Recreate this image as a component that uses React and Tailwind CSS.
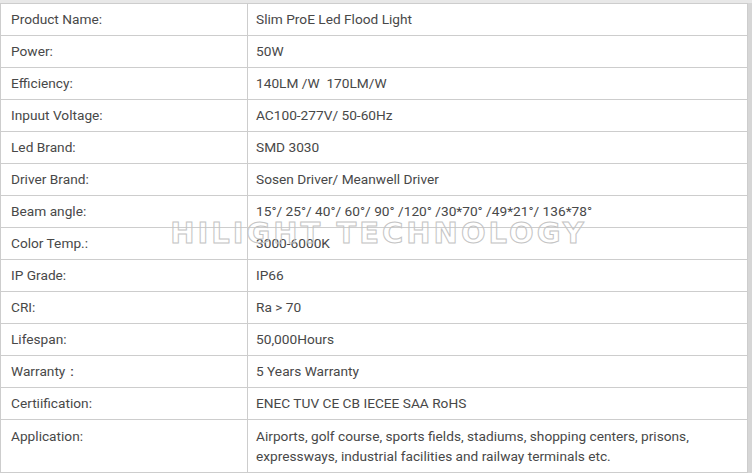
import React from "react";

const rows = [
    ["Product Name:", "Slim ProE Led Flood Light"],
    ["Power:", "50W"],
    ["Efficiency:", "140LM /W  170LM/W"],
    ["Inpuut Voltage:", "AC100-277V/ 50-60Hz"],
    ["Led Brand:", "SMD 3030"],
    ["Driver Brand:", "Sosen Driver/ Meanwell Driver"],
    ["Beam angle:", "15°/ 25°/ 40°/ 60°/ 90° /120° /30*70° /49*21°/ 136*78°"],
    ["Color Temp.:", "3000-6000K"],
    ["IP Grade:", "IP66"],
    ["CRI:", "Ra > 70"],
    ["Lifespan:", "50,000Hours"],
    ["Warranty：", "5 Years Warranty"],
    ["Certiification:", "ENEC TUV CE CB IECEE SAA RoHS"],
];

const App = () => {
    return (
        <div className="relative w-[752px] h-[473px] bg-white overflow-hidden font-['Roboto',sans-serif] text-[13.7px] text-[#484848]">
            <div className="h-[3px] bg-[#e8e8e8]" />
            <div className="flex">
                <div className="w-[748px] border-l border-t border-r border-[#cdcdcd]">
                    {rows.map(([label, value]) => (
                        <div
                            key={label}
                            className="grid grid-cols-[247px_1fr] h-[32px] border-b border-[#cdcdcd] whitespace-pre"
                        >
                            <div className="border-r border-[#cdcdcd] pl-[10px] flex items-center">{label}</div>
                            <div className="pl-[8px] flex items-center">{value}</div>
                        </div>
                    ))}
                    <div className="grid grid-cols-[247px_1fr] h-[53px] border-b border-[#cdcdcd] leading-[20px]">
                        <div className="border-r border-[#cdcdcd] pl-[10px] pt-[6px]">Application:</div>
                        <div className="pl-[8px] pt-[6px]">
                            Airports, golf course, sports fields, stadiums, shopping centers, prisons,
                            <br />
                            expressways, industrial facilities and railway terminals etc.
                        </div>
                    </div>
                </div>
                <div className="w-[4px] bg-[#d6d6d6]" />
            </div>
            <div className="absolute left-0 right-0 top-[217px] flex justify-center pointer-events-none">
                <span className="ml-[5px] font-['DejaVu_Sans',sans-serif] font-bold text-[29px] leading-[32px] tracking-[3px] text-transparent [-webkit-text-stroke:1px_#c4c4c4]">
                    HILIGHT TECHNOLOGY
                </span>
            </div>
        </div>
    );
};

export default App;
